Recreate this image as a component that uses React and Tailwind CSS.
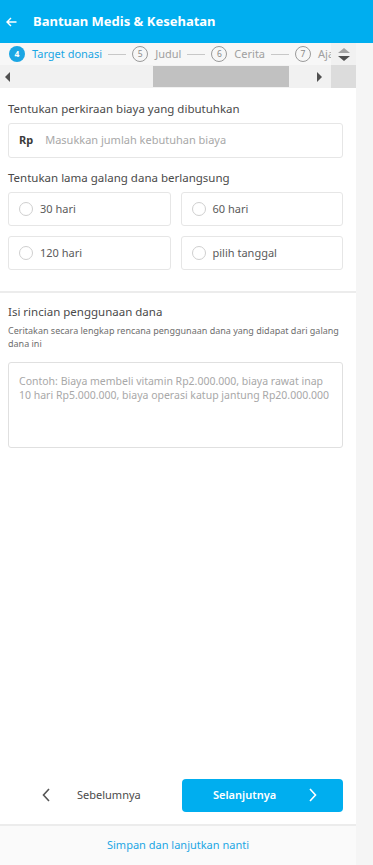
import React from 'react';

const font = { fontFamily: '"Noto Sans", "Open Sans", sans-serif' };

const Step = ({ n, label, active }) => (
  <div className="flex items-center shrink-0">
    <div
      className={`w-[16px] h-[16px] rounded-full flex items-center justify-center text-[8.5px] leading-none ${
        active ? 'bg-[#1aa6e4] text-white font-bold' : 'border border-[#9a9a9a] text-[#8a8a8a]'
      }`}
    >
      {n}
    </div>
    <span className={`ml-[7px] text-[11px] whitespace-nowrap ${active ? 'text-[#1aa6e4]' : 'text-[#a0a0a0]'}`}>
      {label}
    </span>
  </div>
);

const Line = () => <div className="w-[18px] h-px bg-[#c8c8c8] mx-[6px] shrink-0" />;

const Radio = ({ label }) => (
  <label className="flex items-center h-[34px] border border-[#e6e6e6] rounded-[3px] px-[10px] gap-[7px]">
    <span className="w-[14px] h-[14px] rounded-full border border-[#cfcfcf] bg-white" />
    <span className="text-[11px] text-[#5a5a5a]">{label}</span>
  </label>
);

export default function App() {
  return (
    <div className="w-full h-[865px] flex flex-col bg-[#f5f5f5] overflow-hidden" style={font}>
      {/* header */}
      <div className="h-[43px] bg-[#00aeef] flex items-center shrink-0">
        <svg className="ml-[6px]" width="11" height="10" viewBox="0 0 11 10" fill="none" stroke="white" strokeWidth="1.4">
          <path d="M10.5 5H1.2M5 1L1 5l4 4" />
        </svg>
        <span className="ml-[16px] text-white text-[13px] font-bold">Bantuan Medis &amp; Kesehatan</span>
      </div>

      <div className="w-[356px] flex-1 flex flex-col bg-white">
        {/* stepper with scrollbars */}
        <div className="flex h-[45px] shrink-0">
          <div className="flex flex-col w-[331px]">
            <div className="h-[22px] bg-[#f7f7f7] flex items-center pl-[9px] overflow-hidden">
              <Step n="4" label="Target donasi" active />
              <Line />
              <Step n="5" label="Judul" />
              <Line />
              <Step n="6" label="Cerita" />
              <Line />
              <Step n="7" label="Aja" />
            </div>
            <div className="h-[23px] bg-[#f1f1f1] flex items-center">
              <div className="ml-[5px] w-0 h-0 border-y-[5px] border-y-transparent border-r-[5px] border-r-[#505050]" />
              <div className="ml-[143px] w-[136px] h-[21px] bg-[#c1c1c1]" />
              <div className="ml-[28px] w-0 h-0 border-y-[5px] border-y-transparent border-l-[5px] border-l-[#505050]" />
            </div>
          </div>
          <div className="w-[25px] flex flex-col">
            <div className="h-[22px] bg-[#f1f1f1] flex flex-col items-center justify-center gap-[3px]">
              <div className="w-0 h-0 border-x-[6px] border-x-transparent border-b-[5px] border-b-[#a3a3a3]" />
              <div className="w-0 h-0 border-x-[6px] border-x-transparent border-t-[5px] border-t-[#505050]" />
            </div>
            <div className="h-[23px] bg-[#dcdcdc]" />
          </div>
        </div>

        {/* form */}
        <div className="px-[8px] pt-[13px] pr-[13px]">
          <p className="text-[11.5px] text-[#4a4a4a] leading-[16px]">Tentukan perkiraan biaya yang dibutuhkan</p>
          <div className="mt-[6px] h-[35px] border border-[#e6e6e6] rounded-[3px] flex items-center px-[10px]">
            <span className="text-[11px] font-bold text-[#3a3a3a]">Rp</span>
            <span className="ml-[12px] text-[11px] text-[#a8a8a8]">Masukkan jumlah kebutuhan biaya</span>
          </div>
          <p className="mt-[12px] text-[11.5px] text-[#4a4a4a] leading-[16px]">Tentukan lama galang dana berlangsung</p>
          <div className="mt-[6px] grid grid-cols-2 gap-x-[10px] gap-y-[10px]">
            <Radio label="30 hari" />
            <Radio label="60 hari" />
            <Radio label="120 hari" />
            <Radio label="pilih tanggal" />
          </div>
        </div>

        <div className="mt-[21px] h-[2px] bg-[#ececec]" />

        <div className="px-[8px] pr-[13px] pt-[11px]">
          <p className="text-[11.5px] text-[#4a4a4a] leading-[16px]">Isi rincian penggunaan dana</p>
          <p className="mt-[4px] text-[9px] text-[#6e6e6e] leading-[13px]">
            Ceritakan secara lengkap rencana penggunaan dana yang didapat dari galang dana ini
          </p>
          <div className="mt-[12px] h-[86px] border border-[#e0e0e0] rounded-[3px] px-[10px] pt-[11px]">
            <p className="text-[10.5px] text-[#a8a8a8] leading-[14px]">
              Contoh: Biaya membeli vitamin Rp2.000.000, biaya rawat inap 10 hari Rp5.000.000, biaya operasi katup jantung Rp20.000.000
            </p>
          </div>
        </div>

        <div className="flex-1" />

        {/* nav buttons */}
        <div className="flex items-center h-[46px] pl-[8px] pr-[13px] pb-[12px] shrink-0">
          <div className="w-[174px] flex items-center">
            <svg className="ml-[34px]" width="8" height="14" viewBox="0 0 8 14" fill="none" stroke="#555" strokeWidth="1.6">
              <path d="M7 1L1.5 7L7 13" />
            </svg>
            <span className="ml-[27px] text-[11px] text-[#4a4a4a]">Sebelumnya</span>
          </div>
          <button className="flex-1 h-[33px] bg-[#00aeef] rounded-[4px] flex items-center">
            <span className="ml-[31px] text-[11px] font-semibold text-white">Selanjutnya</span>
            <svg className="ml-[33px]" width="8" height="14" viewBox="0 0 8 14" fill="none" stroke="white" strokeWidth="1.6">
              <path d="M1 1L6.5 7L1 13" />
            </svg>
          </button>
        </div>

        <div className="h-[41px] border-t-2 border-[#ececec] bg-[#fafafa] flex items-center justify-center shrink-0">
          <span className="text-[11px] text-[#1aa6e4]">Simpan dan lanjutkan nanti</span>
        </div>
      </div>
    </div>
  );
}
